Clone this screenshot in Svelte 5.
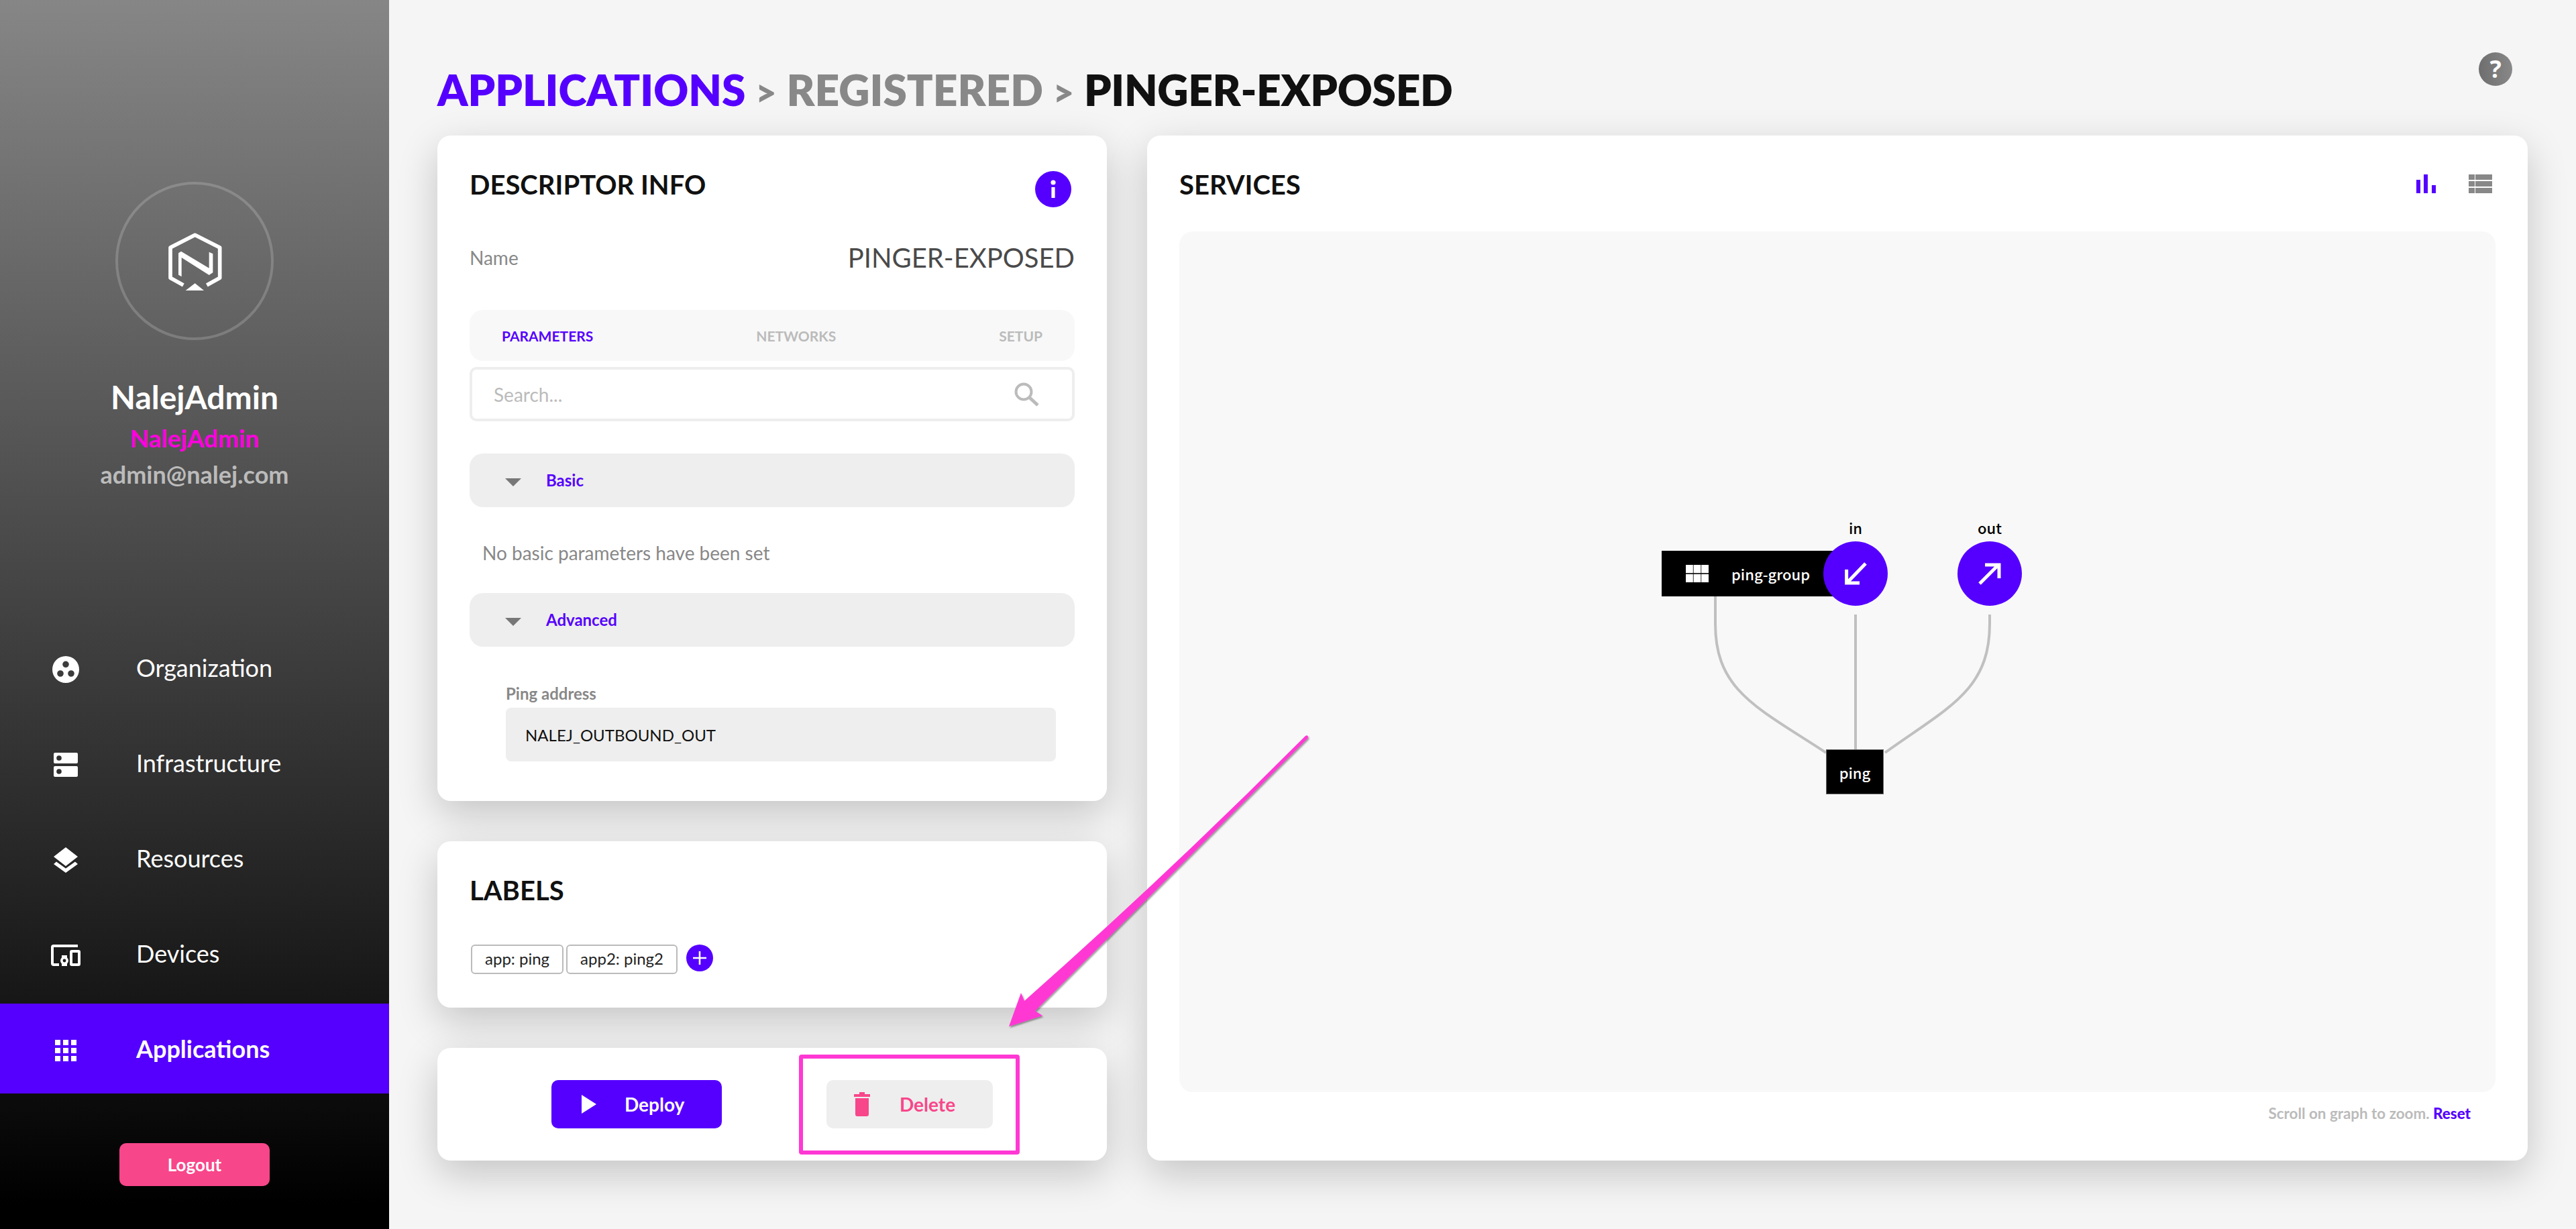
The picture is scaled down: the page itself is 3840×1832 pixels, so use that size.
<script>
  const nav = [
    { id: 'org', label: 'Organization' },
    { id: 'infra', label: 'Infrastructure' },
    { id: 'res', label: 'Resources' },
    { id: 'dev', label: 'Devices' },
    { id: 'apps', label: 'Applications', active: true }
  ];
</script>

<div class="page">
  <aside class="sidebar">
    <div class="avatar">
      <svg viewBox="0 0 360 360" width="120" height="120">
        <path d="M130 288L72 256V120L182 64L293 120V256L235 288" fill="none" stroke="#fff" stroke-width="17" stroke-linejoin="round"/>
        <path d="M108 145L120 137L245 212V140L262 148V232L245 243L122 165V250L108 242Z" fill="#fff"/>
        <path d="M140 312L182 280L222 312Z" fill="#fff"/>
      </svg>
    </div>
    <div class="who">
      <div class="uname">NalejAdmin</div>
      <div class="role">NalejAdmin</div>
      <div class="mail">admin@nalej.com</div>
    </div>
    <nav class="nav">
      {#each nav as n}
        <div class="item" class:active={n.active}>
          <span class="nicon">
            {#if n.id === 'org'}
              <svg viewBox="0 0 40 40" width="40" height="40"><path fill-rule="evenodd" d="M20 0a20 20 0 1 0 0 40a20 20 0 1 0 0-40Z M20 7.5a4.8 4.8 0 1 0 0 9.6a4.8 4.8 0 1 0 0-9.6Z M12 21.2a4.8 4.8 0 1 0 0 9.6a4.8 4.8 0 1 0 0-9.6Z M28 21.2a4.8 4.8 0 1 0 0 9.6a4.8 4.8 0 1 0 0-9.6Z" fill="#fff"/></svg>
            {:else if n.id === 'infra'}
              <svg viewBox="0 0 36 36" width="36" height="36"><path fill-rule="evenodd" d="M2 0H34a2 2 0 0 1 2 2V14a2 2 0 0 1-2 2H2a2 2 0 0 1-2-2V2a2 2 0 0 1 2-2Z M8 4.2a3.8 3.8 0 1 0 0 7.6a3.8 3.8 0 1 0 0-7.6Z M2 20H34a2 2 0 0 1 2 2V34a2 2 0 0 1-2 2H2a2 2 0 0 1-2-2V22a2 2 0 0 1 2-2Z M8 24.2a3.8 3.8 0 1 0 0 7.6a3.8 3.8 0 1 0 0-7.6Z" fill="#fff"/></svg>
            {:else if n.id === 'res'}
              <svg viewBox="0 0 36 38" width="36" height="38"><path d="M18 0L36 14L18 28L0 14Z M0 25L4 21.5L18 31.5L32 21.5L36 25L18 38Z" fill="#fff"/></svg>
            {:else if n.id === 'dev'}
              <svg viewBox="0 0 44 32" width="44" height="32"><path d="M40 2H4a2 2 0 0 0-2 2V28a2 2 0 0 0 2 2H12" stroke="#fff" stroke-width="4" fill="none"/><rect x="30" y="10" width="12" height="20" rx="1" fill="none" stroke="#fff" stroke-width="4"/><rect x="16" y="16" width="8" height="16" fill="#fff"/><circle cx="20" cy="24" r="6" fill="#fff"/><circle cx="20" cy="24" r="2.4" fill="#1c1c1c"/></svg>
            {:else}
              <svg viewBox="0 0 32 32" width="32" height="32" fill="#fff"><rect width="8" height="8"/><rect x="12" width="8" height="8"/><rect x="24" width="8" height="8"/><rect y="12" width="8" height="8"/><rect x="12" y="12" width="8" height="8"/><rect x="24" y="12" width="8" height="8"/><rect y="24" width="8" height="8"/><rect x="12" y="24" width="8" height="8"/><rect x="24" y="24" width="8" height="8"/></svg>
            {/if}
          </span>
          <span>{n.label}</span>
        </div>
      {/each}
    </nav>
    <button class="logout">Logout</button>
  </aside>

  <main class="main">
    <header class="head">
      <h1><span class="a">APPLICATIONS</span> <span class="sep">&gt;</span> <span class="b">REGISTERED</span> <span class="sep">&gt;</span> <span class="c">PINGER-EXPOSED</span></h1>
      <span class="help">?</span>
    </header>
    <div class="cols">
      <div class="left">
        <section class="card info">
          <div class="ctitle">
            <h2>DESCRIPTOR INFO</h2>
            <span class="i"><svg viewBox="0 0 54 54" width="54" height="54"><circle cx="27" cy="27" r="27" fill="#5500ff"/><circle cx="27" cy="17" r="3.6" fill="#fff"/><rect x="24.4" y="24" width="5.2" height="16" fill="#fff"/></svg></span>
          </div>
          <div class="namerow"><span class="nl">Name</span><span class="nv">PINGER-EXPOSED</span></div>
          <div class="tabs"><span class="on">PARAMETERS</span><span>NETWORKS</span><span>SETUP</span></div>
          <div class="search">
            <span>Search...</span>
            <svg viewBox="0 0 38 36" width="38" height="36"><circle cx="14" cy="14" r="11.5" fill="none" stroke="#bbb" stroke-width="4"/><path d="M22 22L35 34" stroke="#bbb" stroke-width="5"/></svg>
          </div>
          <div class="acc"><i class="tri"></i><span>Basic</span></div>
          <div class="none">No basic parameters have been set</div>
          <div class="acc"><i class="tri"></i><span>Advanced</span></div>
          <div class="param">
            <label for="ping">Ping address</label>
            <div class="val" id="ping">NALEJ_OUTBOUND_OUT</div>
          </div>
        </section>

        <section class="card labels">
          <h2>LABELS</h2>
          <div class="chips">
            <span class="chip">app: ping</span>
            <span class="chip">app2: ping2</span>
            <span class="plus"><svg viewBox="0 0 40 40" width="40" height="40"><circle cx="20" cy="20" r="20" fill="#5500ff"/><path d="M20 10V30M10 20H30" stroke="#fff" stroke-width="2.6"/></svg></span>
          </div>
        </section>

        <section class="card actions">
          <button class="deploy"><svg viewBox="0 0 22 28" width="22" height="28"><path d="M0 0L22 14L0 28Z" fill="#fff"/></svg><span>Deploy</span></button>
          <button class="delete"><svg viewBox="0 0 24 36" width="24" height="36"><path d="M0 3H8V0H16V3H24V7H0Z M2 9H22V33a3 3 0 0 1-3 3H5a3 3 0 0 1-3-3Z" fill="#f8468a"/></svg><span>Delete</span></button>
        </section>
      </div>

      <section class="card services">
        <div class="ctitle svc">
          <h2>SERVICES</h2>
          <div class="tools">
            <svg viewBox="0 0 29 28" width="29" height="28" fill="#5500ff"><rect y="8" width="6" height="20"/><rect x="11" width="6" height="28"/><rect x="23" y="16" width="6" height="12"/></svg>
            <svg viewBox="0 0 35 28" width="35" height="28" fill="#888"><rect width="9" height="8"/><rect x="10" width="25" height="8"/><rect y="10" width="9" height="8"/><rect x="10" y="10" width="25" height="8"/><rect y="20" width="9" height="8"/><rect x="10" y="20" width="25" height="8"/></svg>
          </div>
        </div>
        <div class="graph">
          <svg class="edges" viewBox="1758 345 1962 1283">
            <g fill="none" stroke="#c0c0c0" stroke-width="4">
              <path d="M2557 889V930C2557 1030 2620 1055 2722 1122"/>
              <path d="M2766 916V1117"/>
              <path d="M2966 916V930C2966 1030 2903 1055 2810 1122"/>
            </g>
          </svg>
          <div class="gnode group">
            <svg viewBox="0 0 34 26" width="34" height="26" fill="#fff"><rect width="10.8" height="12.2"/><rect x="11.6" width="10.8" height="12.2"/><rect x="23.2" width="10.8" height="12.2"/><rect y="13.8" width="10.8" height="12.2"/><rect x="11.6" y="13.8" width="10.8" height="12.2"/><rect x="23.2" y="13.8" width="10.8" height="12.2"/></svg>
            <span>ping-group</span>
          </div>
          <div class="gnode ping">ping</div>
          <div class="port pin"><span class="plabel">in</span>
            <svg viewBox="0 0 96 96" width="96" height="96"><circle cx="48" cy="48" r="48" fill="#5500ff"/><path d="M63 33L35 62M34.6 42V62H54" fill="none" stroke="#fff" stroke-width="5"/></svg>
          </div>
          <div class="port pout"><span class="plabel">out</span>
            <svg viewBox="0 0 96 96" width="96" height="96"><circle cx="48" cy="48" r="48" fill="#5500ff"/><path d="M33 63L61 35M41 35H62V55" fill="none" stroke="#fff" stroke-width="5"/></svg>
          </div>
        </div>
        <div class="hint">Scroll on graph to zoom. <b>Reset</b></div>
      </section>
    </div>
  </main>

  <svg class="overlay" viewBox="0 0 3840 1832" width="3840" height="1832">
    <defs>
      <filter id="ds" x="-10%" y="-10%" width="120%" height="120%"><feDropShadow dx="1.5" dy="2" stdDeviation="1.2" flood-color="#000" flood-opacity=".4"/></filter>
    </defs>
    <path d="M1946 1097Q1949 1095 1950 1098Q1950 1100 1949 1101L1543 1507L1554 1514L1504 1530L1522 1480L1527 1492Q1743 1301 1946 1097Z" fill="#ff38d4" filter="url(#ds)"/>
    <rect x="1194" y="1575" width="323" height="143" rx="1" fill="none" stroke="#ff38d4" stroke-width="6"/>
  </svg>
</div>

<style>
  :global(body) { margin: 0; background: #f5f5f5; }
  .page { position: relative; display: flex; width: 3840px; height: 1832px; overflow: hidden; font-family: Lato, "Liberation Sans", sans-serif; background: #f5f5f5; }
  .sidebar { width: 580px; flex: none; height: 1832px; background: linear-gradient(#868686, #000 98%); display: flex; flex-direction: column; align-items: center; color: #fff; box-sizing: border-box; padding-top: 271px; }
  .avatar { width: 236px; height: 236px; box-sizing: border-box; border: 4px solid rgba(255,255,255,.18); border-radius: 50%; display: flex; align-items: center; justify-content: center; }
  .who { margin-top: 53px; text-align: center; display: flex; flex-direction: column; align-items: center; }
  .uname { font-size: 48px; line-height: 64px; font-weight: 700; }
  .role { font-size: 37px; line-height: 54px; margin-top: 2px; font-weight: 700; color: #ff00e0; }
  .mail { font-size: 36px; line-height: 54px; font-weight: 700; color: #bbb; }
  .nav { align-self: stretch; margin-top: 194px; display: flex; flex-direction: column; gap: 8px; }
  .item { height: 134px; display: flex; align-items: center; font-size: 36px; padding-left: 203px; position: relative; }
  .item.active { background: #5500ff; font-weight: 700; }
  .nicon { position: absolute; left: 98px; top: calc(50% + 3px); transform: translate(-50%, -50%); display: flex; }
  .logout { margin-top: 74px; width: 224px; height: 64px; border: 0; border-radius: 10px; background: #f8468a; color: #fff; font: 700 26px Lato, sans-serif; padding: 0; }

  .main { flex: 1; min-width: 0; padding-left: 72px; padding-right: 72px; box-sizing: border-box; }
  .head { height: 202px; box-sizing: border-box; padding-top: 94px; display: flex; justify-content: space-between; align-items: flex-start; }
  h1 { margin: 0; font-size: 64px; line-height: 80px; font-weight: 800; }
  h1 .a { color: #5500ff; }
  h1 .b { color: #888; }
  h1 .c { color: #111; letter-spacing: -0.3px; }
  h1 .sep { color: #888; font-size: 54px; }
  .help { flex: none; margin: -16px 23px 0 0; width: 50px; height: 50px; border-radius: 50%; background: linear-gradient(90deg,#6e6e6e,#888); color: #fff; font: 700 36px/50px "Noto Sans", sans-serif; text-align: center; }
  .cols { display: flex; gap: 60px; }
  .left { width: 998px; flex: none; display: flex; flex-direction: column; gap: 60px; }
  .card { background: #fff; border-radius: 20px; box-shadow: 0 20px 60px rgba(0,0,0,.2); box-sizing: border-box; }
  h2 { margin: 0; font-size: 40px; line-height: 48px; font-weight: 700; color: #111; }
  .info { height: 992px; padding: 49px 48px 0; }
  .ctitle { display: flex; justify-content: space-between; align-items: flex-start; }
  .ctitle .i { display: flex; margin-top: 4px; margin-right: 5px; }
  .namerow { display: flex; justify-content: space-between; align-items: center; height: 60px; margin-top: 45px; }
  .nl { font-size: 28px; color: #888; }
  .nv { font-size: 40px; color: #4a4a4a; }
  .tabs { margin-top: 48px; height: 76px; background: #f8f8f8; border-radius: 20px; display: flex; justify-content: space-between; align-items: center; padding: 0 48px; font-size: 21px; font-weight: 700; color: #bbb; }
  .tabs .on { color: #5500ff; }
  .search { margin-top: 9px; height: 81px; box-sizing: border-box; border: 4px solid #eee; border-radius: 10px; display: flex; justify-content: space-between; align-items: center; padding: 0 48px 0 32px; font-size: 28px; color: #bbb; }
  .acc { height: 80px; background: #eee; border-radius: 20px; display: flex; align-items: center; color: #5500ff; font-size: 24px; font-weight: 700; padding-left: 53px; margin-top: 48px; }
  .acc span { margin-left: 37px; margin-top: -2px; }
  .tri { width: 0; height: 0; border-left: 12px solid transparent; border-right: 12px solid transparent; border-top: 12px solid #777; margin-top: 6px; }
  .none { font-size: 28px; color: #888; line-height: 40px; padding: 48px 0 0 19px; height: 80px; }
  .none + .acc { margin-top: 0; }
  .param { padding: 58px 28px 0 54px; }
  label { display: block; font-size: 24px; line-height: 24px; font-weight: 700; color: #888; }
  .val { margin-top: 9px; height: 80px; background: #eee; border-radius: 8px; display: flex; align-items: center; padding-left: 29px; font-size: 24px; color: #111; }
  .labels { height: 248px; padding: 49px 48px 0; }
  .chips { display: flex; align-items: flex-start; gap: 4px; margin-top: 57px; margin-left: 2px; }
  .chip { height: 44px; box-sizing: border-box; border: 2.5px solid #bbb; border-radius: 6px; padding: 0 19px; font-size: 24px; line-height: 38px; color: #222; }
  .plus { display: flex; margin-left: 9px; }
  .actions { height: 168px; display: flex; align-items: center; padding-left: 170px; }
  .actions button { height: 72px; border: 0; border-radius: 10px; display: flex; align-items: center; font: 700 28px Lato, sans-serif; padding: 0; }
  .deploy { width: 254px; background: #5500ff; color: #fff; padding-left: 45px !important; gap: 42px; }
  .delete { width: 248px; background: #eee; color: #f8468a; margin-left: 156px; padding-left: 41px !important; gap: 44px; }

  .services { flex: 1; height: 1528px; padding: 49px 48px 0; position: relative; }
  .svc { height: 94px; }
  .tools { display: flex; gap: 49px; align-items: flex-start; margin-top: 9px; margin-right: 5px; }
  .graph { height: 1283px; background: #f8f8f8; border-radius: 20px; position: relative; overflow: hidden; font-family: "Noto Sans CJK JP", "Noto Sans", sans-serif; font-weight: 500; }
  .edges { position: absolute; inset: 0; width: 100%; height: 100%; }
  .gnode { position: absolute; background: #000; color: #fff; font-size: 22px; display: flex; align-items: center; }
  .group { left: 719px; top: 476px; width: 290px; height: 68px; padding-left: 36px; gap: 34px; box-sizing: border-box; }
  .ping { left: 964px; top: 772px; width: 86px; height: 67px; justify-content: center; box-sizing: border-box; border: 1px solid #666; }
  .port { position: absolute; top: 462px; width: 96px; height: 96px; }
  .port svg { display: block; }
  .pin { left: 960px; }
  .pout { left: 1160px; }
  .plabel { position: absolute; left: 0; right: 0; top: -38px; text-align: center; color: #000; font-size: 22px; line-height: 34px; }
  .hint { position: absolute; right: 85px; top: 1444px; font-size: 22.4px; line-height: 28px; font-weight: 700; color: #bbb; }
  .hint b { color: #5500ff; }
  .overlay { position: absolute; left: 0; top: 0; pointer-events: none; }
</style>
